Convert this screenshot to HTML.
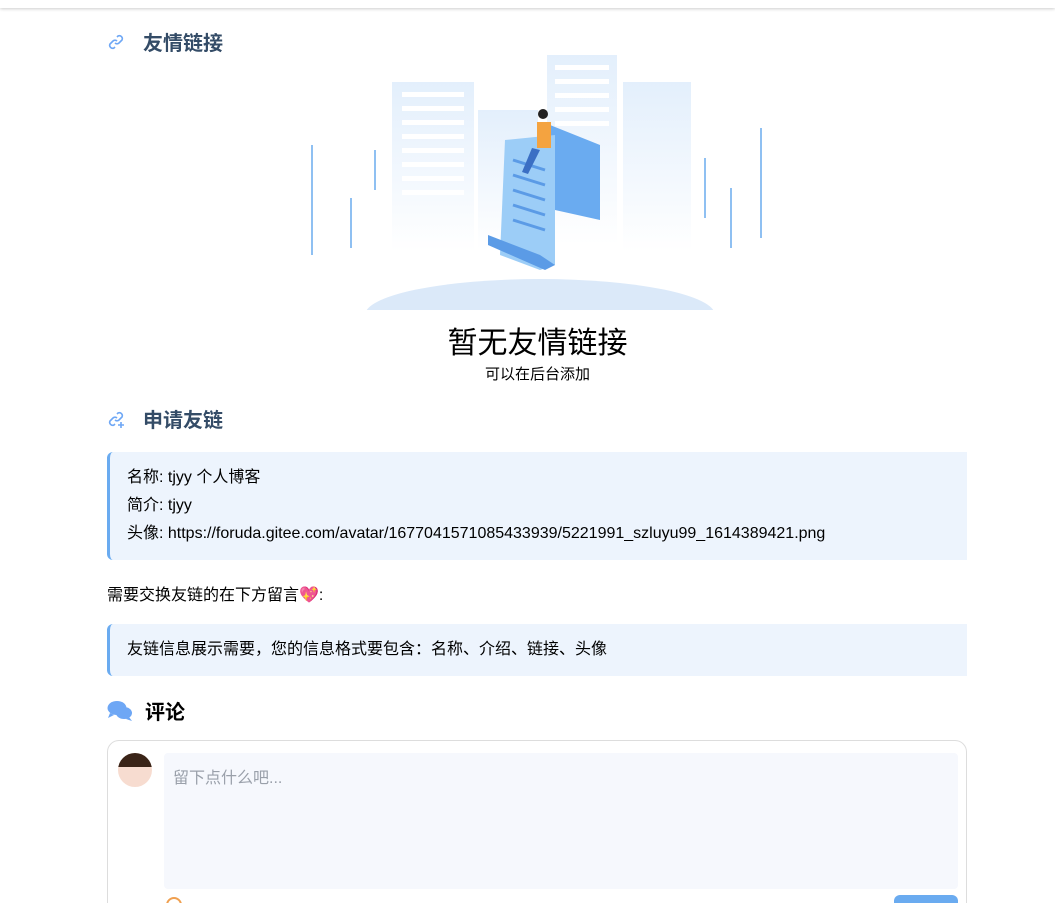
<!DOCTYPE html>
<html><head><meta charset="utf-8"><style>
*{margin:0;padding:0;box-sizing:border-box}
html{width:1055px;height:903px;overflow:hidden}
body{width:1055px;height:903px;overflow:hidden;background:#fff;font-family:"Liberation Sans","Noto Sans CJK SC",sans-serif;color:#000;position:relative}
.top{position:absolute;left:0;top:0;width:1055px;height:8px;background:#fff;box-shadow:0 1px 3px rgba(0,0,0,.2)}
.h{position:absolute;left:107px;font-size:20px;font-weight:bold;color:#344c67;display:flex;align-items:center}
.h svg{margin-right:18px}
.q{position:absolute;left:107px;width:860px;background:#edf4fd;border-left:3px solid #6aabf0;border-radius:6px 0 0 6px;font-size:16px;padding-left:17px;line-height:28px}
</style></head><body>
<div class="top"></div>
<div class="h" style="top:27px"><svg width="18" height="18" viewBox="0 0 18 18" fill="none" stroke="#6ea7f5" stroke-width="1.6"><path d="M8 10a3 3 0 0 0 4 0l3-3a3 3 0 0 0-4-4l-1 1"/><path d="M10 8a3 3 0 0 0-4 0l-3 3a3 3 0 0 0 4 4l1-1"/></svg>友情链接</div>
<svg style="position:absolute;left:300px;top:50px" width="470" height="270" viewBox="0 0 470 270">
<defs><linearGradient id="g" x1="0" y1="0" x2="0" y2="1"><stop offset="0" stop-color="#e3effc"/><stop offset="1" stop-color="#fff"/></linearGradient></defs>
<rect x="92" y="32" width="82" height="170" fill="url(#g)"/>
<rect x="178" y="60" width="60" height="140" fill="url(#g)"/>
<rect x="247" y="5" width="70" height="190" fill="url(#g)"/>
<rect x="323" y="32" width="68" height="170" fill="url(#g)"/>
<g fill="#fff"><rect x="102" y="42" width="62" height="5"/><rect x="102" y="56" width="62" height="5"/><rect x="102" y="70" width="62" height="5"/><rect x="102" y="84" width="62" height="5"/><rect x="102" y="98" width="62" height="5"/><rect x="102" y="112" width="62" height="5"/><rect x="102" y="126" width="62" height="5"/><rect x="102" y="140" width="62" height="5"/><rect x="255" y="15" width="54" height="5"/><rect x="255" y="29" width="54" height="5"/><rect x="255" y="43" width="54" height="5"/><rect x="255" y="57" width="54" height="5"/><rect x="255" y="71" width="54" height="5"/></g>
<rect x="11" y="95" width="2" height="110" fill="#8fc0f2"/><rect x="50" y="148" width="2" height="50" fill="#8fc0f2"/><rect x="74" y="100" width="2" height="40" fill="#8fc0f2"/><rect x="404" y="108" width="2" height="60" fill="#8fc0f2"/><rect x="430" y="138" width="2" height="60" fill="#8fc0f2"/><rect x="460" y="78" width="2" height="110" fill="#8fc0f2"/>
<ellipse cx="240" cy="265" rx="175" ry="36" fill="#dbe9f9"/>
<rect x="0" y="260" width="470" height="10" fill="#fff"/>
<path d="M250 75 L300 95 L300 170 L255 160 Z" fill="#6aabf0"/>
<path d="M205 90 L255 85 L255 215 L240 220 L200 205 Z" fill="#9ccdf7"/>
<path d="M188 185 L240 205 L255 215 L245 220 L188 195 Z" fill="#5b9be6"/>
<g stroke="#5b9be6" stroke-width="3"><line x1="213" y1="110" x2="245" y2="120"/><line x1="213" y1="125" x2="245" y2="135"/><line x1="213" y1="140" x2="245" y2="150"/><line x1="213" y1="155" x2="245" y2="165"/><line x1="213" y1="170" x2="245" y2="180"/></g>
<rect x="237" y="72" width="14" height="26" fill="#f4a340"/><circle cx="243" cy="64" r="5" fill="#222"/><path d="M232 98 L222 122 L228 124 L240 100Z" fill="#3b6fc4"/>
</svg>
<div style="position:absolute;left:0;width:1075px;top:318px;text-align:center;font-size:30px">暂无友情链接</div>
<div style="position:absolute;left:0;width:1075px;top:363px;text-align:center;font-size:15px">可以在后台添加</div>
<div class="h" style="top:404px"><svg width="18" height="18" viewBox="0 0 18 18" fill="none" stroke="#6ea7f5" stroke-width="1.6"><path d="M8 10a3 3 0 0 0 4 0l3-3a3 3 0 0 0-4-4l-1 1"/><path d="M10 8a3 3 0 0 0-4 0l-3 3a3 3 0 0 0 4 4l1-1"/><path d="M14 12v6M11 15h6"/></svg>申请友链</div>
<div class="q" style="top:452px;height:108px;padding-top:12px">名称: tjyy 个人博客<br>简介: tjyy<br>头像: https://foruda.gitee.com/avatar/1677041571085433939/5221991_szluyu99_1614389421.png</div>
<div style="position:absolute;left:107px;top:581px;font-size:16px">需要交换友链的在下方留言💖:</div>
<div class="q" style="top:624px;height:52px;line-height:52px">友链信息展示需要，您的信息格式要包含：名称、介绍、链接、头像</div>
<div class="h" style="top:696px;color:#000;font-size:20px"><svg width="26" height="22" viewBox="0 0 26 22" fill="#6ea7f5" style="margin-right:12px"><ellipse cx="10" cy="8" rx="9.5" ry="7"/><path d="M3 13l-2 5 6-3z"/><ellipse cx="17" cy="13" rx="8" ry="6"/><path d="M22 17l3 4-6-2z"/></svg>评论</div>
<div style="position:absolute;left:107px;top:740px;width:860px;height:200px;border:1px solid #ddd;border-radius:12px">
<div style="position:absolute;left:10px;top:12px;width:34px;height:34px;border-radius:50%;background:#f7dcd0;overflow:hidden"><div style="height:14px;background:#3a2418"></div></div>
<div style="position:absolute;left:56px;top:12px;width:794px;height:136px;background:#f6f8fd;border-radius:4px;color:#9aa0aa;font-size:16px;padding:11px 9px">留下点什么吧...</div>
<div style="position:absolute;left:58px;top:156px;width:16px;height:16px;border-radius:50%;border:2px solid #f0a050"></div>
<div style="position:absolute;left:786px;top:154px;width:64px;height:20px;background:#6aabf0;border-radius:6px"></div>
</div>
</body></html>
